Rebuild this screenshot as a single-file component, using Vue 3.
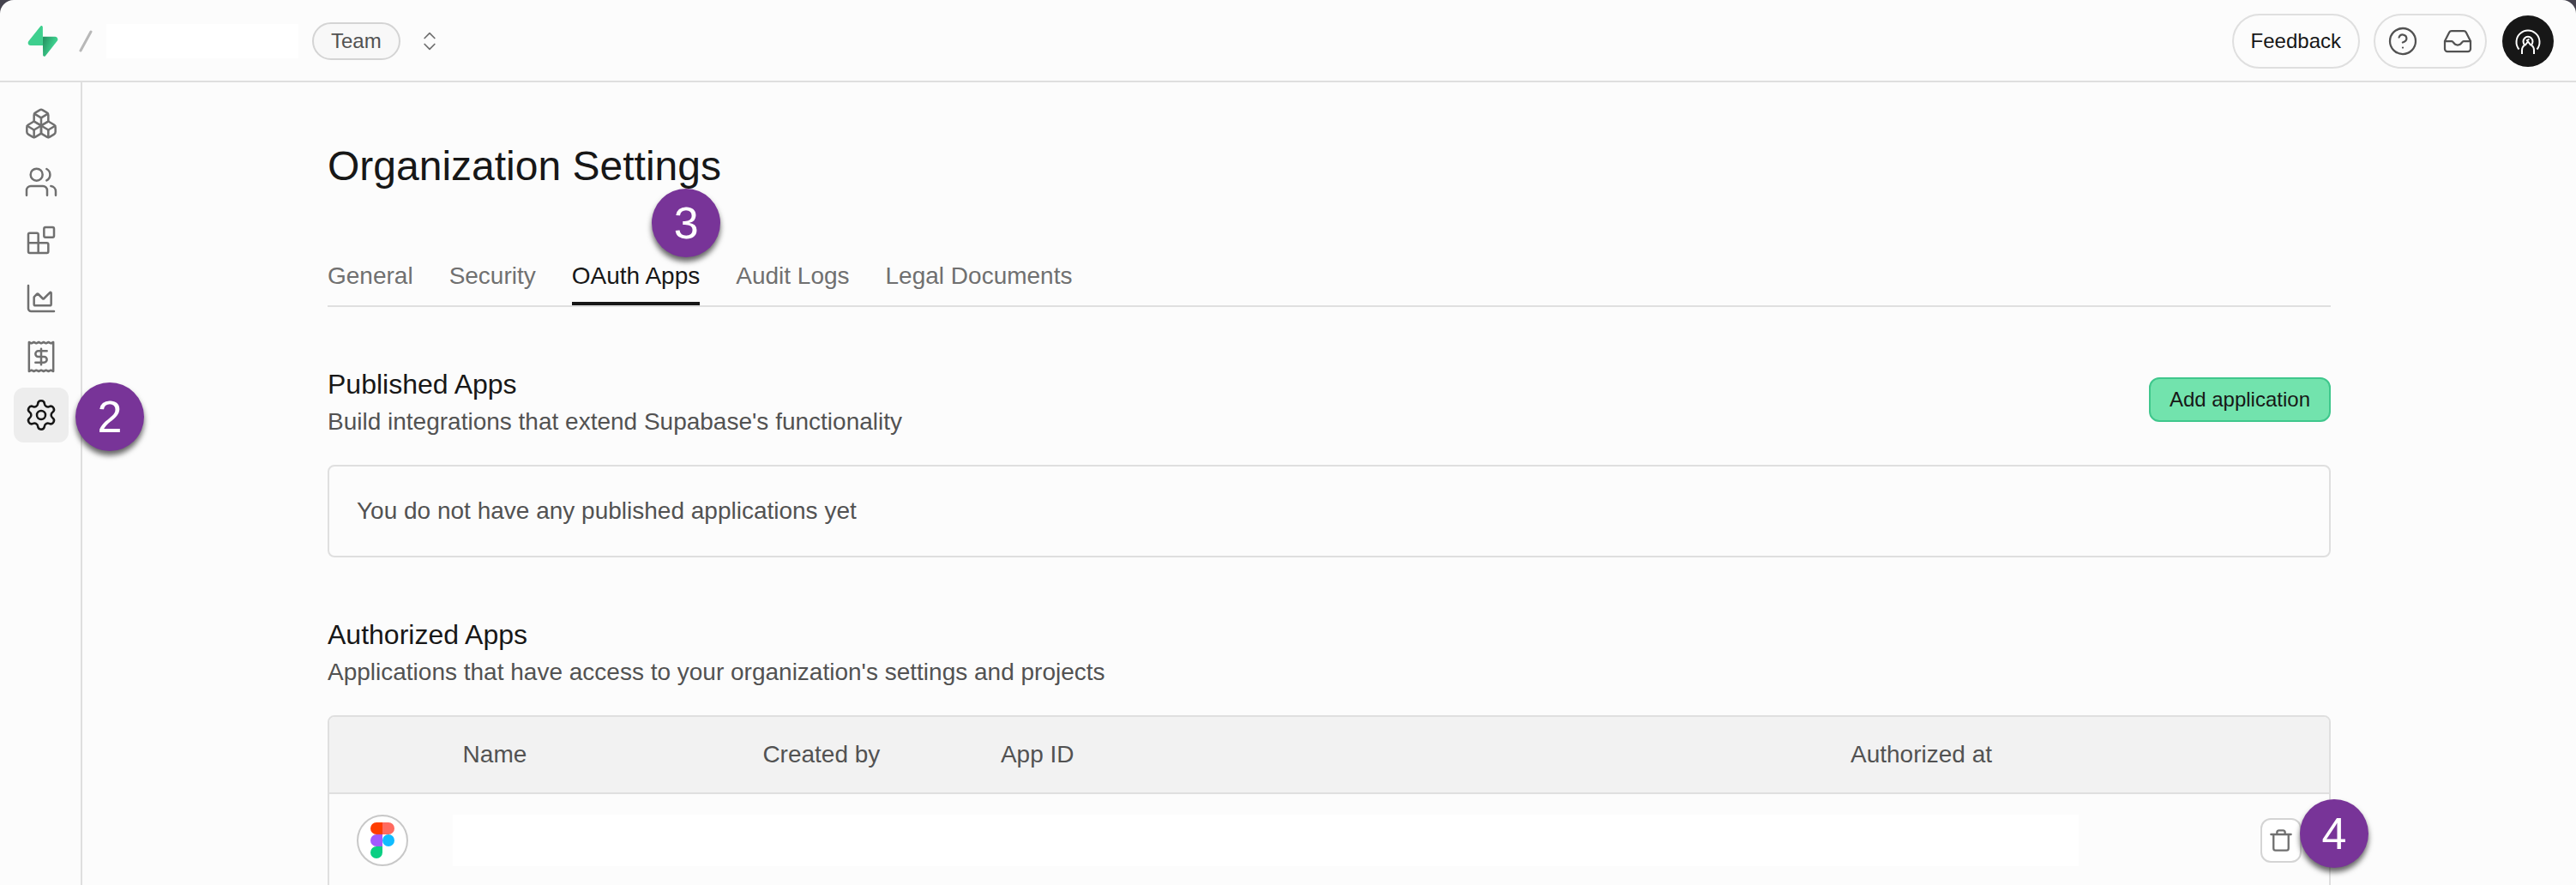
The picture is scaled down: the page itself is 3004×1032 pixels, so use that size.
<template>
  <div class="app-shell">
    <!-- Top bar -->
    <header class="top-bar">
      <div class="breadcrumb">
        <a class="logo" href="#" aria-label="Supabase home">
          <svg viewBox="0 0 109 113" fill="none">
            <defs>
              <linearGradient id="bolt" x1="54" y1="55" x2="94" y2="72" gradientUnits="userSpaceOnUse">
                <stop stop-color="#249361" />
                <stop offset="1" stop-color="#3ecf8e" />
              </linearGradient>
            </defs>
            <path d="M63.7076 110.284C60.8481 113.885 55.0502 111.912 54.9813 107.314L53.9738 40.0627L99.1935 40.0627C107.384 40.0627 111.952 49.5228 106.859 55.9374L63.7076 110.284Z" fill="url(#bolt)" />
            <path d="M45.317 2.07103C48.1765 -1.53037 53.9745 0.442937 54.0434 5.041L54.4849 72.2922H9.83113C1.64038 72.2922 -2.92775 62.8321 2.1655 56.4175L45.317 2.07103Z" fill="#3ecf8e" />
          </svg>
        </a>
        <svg class="slash" viewBox="0 0 16 28" aria-hidden="true">
          <path d="M14 3 2 25" />
        </svg>
        <span class="org-name"></span>
        <span class="plan-pill">Team</span>
        <button class="switcher" type="button" aria-label="Switch organization">
          <svg class="icon" viewBox="0 0 24 24"><path d="m7 15 5 5 5-5M7 9l5-5 5 5" /></svg>
        </button>
      </div>

      <div class="top-actions">
        <button class="feedback-btn" type="button">Feedback</button>
        <div class="icon-group">
          <button type="button" aria-label="Help">
            <svg class="icon" viewBox="0 0 24 24">
              <circle cx="12" cy="12" r="10" />
              <path d="M9.09 9a3 3 0 0 1 5.83 1c0 2-3 3-3 3M12 17h.01" />
            </svg>
          </button>
          <button type="button" aria-label="Notifications">
            <svg class="icon" viewBox="0 0 24 24">
              <path d="M2 12h5.5c1.2 0 1.2 3 4.5 3s3.3-3 4.5-3H22" />
              <path d="M5.45 5.11 2 12v6a2 2 0 0 0 2 2h16a2 2 0 0 0 2-2v-6l-3.45-6.89A2 2 0 0 0 16.76 4H7.24a2 2 0 0 0-1.79 1.11z" />
            </svg>
          </button>
        </div>
        <button class="avatar" type="button" aria-label="Account">
          <svg viewBox="0 0 32 32">
            <path d="M5.5 25.5A13.5 13.5 0 1 1 26.5 25.5" />
            <path d="M9 31v-4.500c0-3 1.200-4.500 3.200-6.200a5.500 5.500 0 1 1 7.600 0c2 1.700 3.200 3.200 3.200 6.200V31" />
            <path d="m12.500 21 3.500-4.500 3.500 4.500M14 15.500l3.500-2" />
          </svg>
        </button>
      </div>
    </header>

    <div class="body">
      <!-- Icon sidebar -->
      <nav class="sidebar" aria-label="Organization">
        <a
          v-for="item in navItems"
          :key="item.label"
          class="nav-item"
          :class="{ active: item.active }"
          :aria-label="item.label"
          href="#"
        >
          <svg class="icon" viewBox="0 0 24 24">
            <path v-for="d in item.paths" :key="d" :d="d" />
          </svg>
          <span v-if="item.step" class="step step-nav">{{ item.step }}</span>
        </a>
      </nav>

      <main class="main">
        <div class="content">
          <h1>Organization Settings</h1>

          <nav class="tabs" aria-label="Settings">
            <a
              v-for="tab in tabs"
              :key="tab.label"
              class="tab"
              :class="{ active: tab.active }"
              href="#"
            >
              {{ tab.label }}
              <span v-if="tab.step" class="step step-tab">{{ tab.step }}</span>
            </a>
          </nav>

          <section>
            <div class="section-head">
              <div>
                <h2>Published Apps</h2>
                <p>Build integrations that extend Supabase's functionality</p>
              </div>
              <button class="add-btn" type="button">Add application</button>
            </div>
            <div class="empty-card">You do not have any published applications yet</div>
          </section>

          <section>
            <div class="section-head">
              <div>
                <h2>Authorized Apps</h2>
                <p>Applications that have access to your organization's settings and projects</p>
              </div>
            </div>
            <table class="apps-table">
              <thead>
                <tr>
                  <th class="col-icon"></th>
                  <th class="col-name">Name</th>
                  <th class="col-created">Created by</th>
                  <th class="col-id">App ID</th>
                  <th class="col-date">Authorized at</th>
                  <th></th>
                </tr>
              </thead>
              <tbody>
                <tr>
                  <td>
                    <div class="app-logo">
                      <svg viewBox="0 0 28 42">
                        <path d="M7 42a7 7 0 0 0 7-7v-7H7a7 7 0 0 0 0 14z" fill="#0acf83" />
                        <path d="M0 21a7 7 0 0 1 7-7h7v14H7a7 7 0 0 1-7-7z" fill="#a259ff" />
                        <path d="M0 7a7 7 0 0 1 7-7h7v14H7a7 7 0 0 1-7-7z" fill="#ff3d00" />
                        <path d="M14 0h7a7 7 0 0 1 0 14h-7z" fill="#ff6a5f" />
                        <circle cx="21" cy="21" r="7" fill="#10bcff" />
                      </svg>
                    </div>
                  </td>
                  <td class="details" colspan="4"><div class="details-blank"></div></td>
                  <td class="actions">
                    <div class="action-wrap">
                      <button class="delete-btn" type="button" aria-label="Revoke app">
                        <svg class="icon" viewBox="0 0 24 24">
                          <path d="M2 6h20M19.500 6v14a2 2 0 0 1-2 2h-11a2 2 0 0 1-2-2V6M8 6V4a2 2 0 0 1 2-2h4a2 2 0 0 1 2 2v2" />
                        </svg>
                      </button>
                      <span class="step step-delete">4</span>
                    </div>
                  </td>
                </tr>
              </tbody>
            </table>
          </section>
        </div>
      </main>
    </div>
  </div>
</template>

<script setup>
import { ref } from 'vue'

const navItems = ref([
  {
    label: 'Projects',
    paths: [
      'M2.97 12.92A2 2 0 0 0 2 14.63v3.24a2 2 0 0 0 .97 1.71l3 1.8a2 2 0 0 0 2.06 0L12 19v-5.5l-5-3-4.03 2.42Z',
      'm7 16.5-4.74-2.85',
      'm7 16.5 5-3',
      'M7 16.5v5.17',
      'M12 13.5V19l3.97 2.38a2 2 0 0 0 2.06 0l3-1.8a2 2 0 0 0 .97-1.71v-3.24a2 2 0 0 0-.97-1.71L17 10.5l-5 3Z',
      'm17 16.5-5-3',
      'm17 16.5 4.74-2.85',
      'M17 16.5v5.17',
      'M7.97 4.42A2 2 0 0 0 7 6.13v4.37l5 3 5-3V6.13a2 2 0 0 0-.97-1.71l-3-1.8a2 2 0 0 0-2.06 0l-3 1.8Z',
      'M12 8 7.26 5.15',
      'm12 8 4.74-2.85',
      'M12 13.5V8'
    ]
  },
  {
    label: 'Team',
    paths: [
      'M4.6 7a4.2 4.2 0 1 0 8.4 0a4.2 4.2 0 1 0-8.4 0',
      'M1.8 21.5V18a3 3 0 0 1 3-3h8.400a3 3 0 0 1 3 3v3.500',
      'M15.800 3a4.500 4.500 0 0 1 0 8',
      'M18.800 15a3.800 3.800 0 0 1 3.400 3.800v2.700'
    ]
  },
  {
    label: 'Integrations',
    paths: [
      'M15 3h5a1 1 0 0 1 1 1v5a1 1 0 0 1-1 1h-5a1 1 0 0 1-1-1V4a1 1 0 0 1 1-1z',
      'M10 21V8a1 1 0 0 0-1-1H4a1 1 0 0 0-1 1v12a1 1 0 0 0 1 1h12a1 1 0 0 0 1-1v-5a1 1 0 0 0-1-1H3'
    ]
  },
  {
    label: 'Usage',
    paths: [
      'M3 3v16a2 2 0 0 0 2 2h16',
      'M7 11.207a.5.5 0 0 1 .146-.353l2-2a.5.5 0 0 1 .708 0l3.292 3.292a.5.5 0 0 0 .708 0l4.292-4.292a.5.5 0 0 1 .854.353V16a1 1 0 0 1-1 1H8a1 1 0 0 1-1-1z'
    ]
  },
  {
    label: 'Billing',
    paths: [
      'M3.5 1.8v20.4l1.7-.8 1.7.8 1.7-.8 1.7.8 1.7-.8 1.7.8 1.7-.8 1.7.8 1.7-.8 1.7.8V1.8l-1.7.8-1.7-.8-1.7.8-1.7-.8-1.7.8-1.7-.8-1.7.8-1.7-.8-1.7.8z',
      'M16 8h-6a2 2 0 1 0 0 4h4a2 2 0 1 1 0 4H8',
      'M12 17.5v-11'
    ]
  },
  {
    label: 'Organization settings',
    active: true,
    step: 2,
    paths: [
      'M9.671 4.136a2.34 2.34 0 0 1 4.659 0 2.34 2.34 0 0 0 3.319 1.915 2.34 2.34 0 0 1 2.33 4.033 2.34 2.34 0 0 0 0 3.831 2.34 2.34 0 0 1-2.33 4.033 2.34 2.34 0 0 0-3.319 1.915 2.34 2.34 0 0 1-4.659 0 2.34 2.34 0 0 0-3.32-1.915 2.34 2.34 0 0 1-2.33-4.033 2.34 2.34 0 0 0 0-3.831A2.34 2.34 0 0 1 6.35 6.051a2.34 2.34 0 0 0 3.319-1.915',
      'M9 12a3 3 0 1 0 6 0a3 3 0 1 0-6 0'
    ]
  }
])

const tabs = ref([
  { label: 'General' },
  { label: 'Security' },
  { label: 'OAuth Apps', active: true, step: 3 },
  { label: 'Audit Logs' },
  { label: 'Legal Documents' }
])
</script>

<style>
body {
  margin: 0;
  background: #45434e;
}
</style>

<style scoped>
.app-shell {
  display: flex;
  flex-direction: column;
  height: 100vh;
  overflow: hidden;
  background: #fcfcfc;
  border-radius: 16px 16px 0 0;
  color: #171717;
  font-family: 'Liberation Sans', Arial, sans-serif;
  font-size: 28px;
  line-height: 40px;
}

*,
*::before {
  box-sizing: border-box;
}

button {
  padding: 0;
  border: none;
  background: none;
  color: inherit;
  font-family: inherit;
  cursor: pointer;
}

a {
  color: inherit;
  text-decoration: none;
}

svg {
  display: block;
}

.icon {
  fill: none;
  stroke: currentColor;
  stroke-width: 1.5;
  stroke-linecap: round;
  stroke-linejoin: round;
}

/* Top bar */
.top-bar {
  display: flex;
  justify-content: space-between;
  align-items: center;
  padding: 16px 24px 14px 32px;
  border-bottom: 2px solid #dfdfdf;
}

.breadcrumb,
.top-actions {
  display: flex;
  align-items: center;
  gap: 16px;
}

.logo {
  margin-right: 8px;
}

.logo svg {
  width: 36px;
  height: 36px;
}

.slash {
  width: 16px;
  height: 28px;
  fill: none;
  stroke: #b8b8b8;
  stroke-width: 3;
  stroke-linecap: round;
}

.org-name {
  width: 224px;
  height: 40px;
  background: #fff;
}

.plan-pill {
  padding: 0 20px;
  border: 2px solid #d4d4d4;
  border-radius: 24px;
  background: #f8f8f8;
  color: #525252;
  font-size: 24px;
}

.switcher {
  display: flex;
  justify-content: center;
  width: 36px;
  color: #707070;
}

.switcher svg {
  width: 28px;
  height: 28px;
}

.feedback-btn {
  height: 64px;
  padding: 0 20px;
  border: 2px solid #dfdfdf;
  border-radius: 32px;
  font-size: 24px;
}

.icon-group {
  display: flex;
  border: 2px solid #dfdfdf;
  border-radius: 32px;
  color: #525252;
}

.icon-group button {
  display: flex;
  align-items: center;
  justify-content: center;
  width: 64px;
  height: 60px;
}

.icon-group svg {
  width: 36px;
  height: 36px;
}

.avatar {
  display: flex;
  align-items: center;
  justify-content: center;
  width: 60px;
  height: 60px;
  margin: 0 2px;
  border-radius: 50%;
  background: #171717;
}

.avatar svg {
  width: 32px;
  height: 32px;
  fill: none;
  stroke: #fff;
  stroke-width: 2;
}

/* Sidebar */
.body {
  display: flex;
  flex: 1;
  min-height: 0;
}

.sidebar {
  position: relative;
  z-index: 1;
  display: flex;
  flex-direction: column;
  gap: 4px;
  padding: 16px 14px 16px 16px;
  border-right: 2px solid #dfdfdf;
}

.nav-item {
  position: relative;
  display: flex;
  align-items: center;
  justify-content: center;
  width: 64px;
  height: 64px;
  border-radius: 12px;
  color: #707070;
}

.nav-item svg {
  width: 40px;
  height: 40px;
}

.nav-item.active {
  background: #ededed;
  color: #171717;
}

/* Numbered step markers */
.step {
  position: absolute;
  z-index: 2;
  display: flex;
  align-items: center;
  justify-content: center;
  width: 80px;
  height: 80px;
  border-radius: 50%;
  background: #783498;
  box-shadow: 0 5px 6px rgba(0, 0, 0, 0.6);
  color: #fff;
  font-size: 52px;
  line-height: 80px;
}

.step-nav {
  top: -6px;
  left: 72px;
}

.step-tab {
  top: -82px;
  right: -24px;
}

.step-delete {
  top: -22px;
  left: 46px;
}

/* Main content */
.main {
  flex: 1;
  min-width: 0;
  overflow: hidden;
}

.content {
  max-width: 2400px;
  margin: 0 auto;
  padding: 66px 32px;
}

h1,
h2,
p {
  margin: 0;
  font-weight: 400;
}

h1 {
  font-size: 48px;
  line-height: 64px;
}

.tabs {
  display: flex;
  gap: 42px;
  margin-top: 76px;
  border-bottom: 2px solid #dfdfdf;
}

.tab {
  position: relative;
  padding-bottom: 10px;
  border-bottom: 4px solid transparent;
  color: #707070;
}

.tab.active {
  border-bottom-color: #171717;
  color: #171717;
}

section {
  margin-top: 70px;
}

.section-head {
  display: flex;
  justify-content: space-between;
  align-items: flex-start;
  margin-bottom: 30px;
}

h2 {
  margin-bottom: 4px;
  font-size: 32px;
}

p {
  color: #525252;
}

.add-btn {
  height: 52px;
  margin-top: 12px;
  padding: 0 22px;
  border: 2px solid #3fc78c;
  border-radius: 12px;
  background: #72e3ad;
  font-size: 24px;
}

.empty-card {
  padding: 32px;
  border: 2px solid #dfdfdf;
  border-radius: 8px;
  color: #525252;
}

.apps-table {
  width: 100%;
  table-layout: fixed;
  border: 2px solid #dfdfdf;
  border-radius: 8px;
  border-collapse: separate;
  border-spacing: 0;
}

th {
  padding: 24px 32px;
  border-bottom: 2px solid #dfdfdf;
  background: #f2f2f2;
  color: #525252;
  font-weight: 400;
  text-align: left;
}

th:first-child {
  border-top-left-radius: 6px;
}

th:last-child {
  border-top-right-radius: 6px;
}

.col-icon {
  width: 5.3%;
}

.col-name {
  width: 15%;
}

.col-created {
  width: 11.9%;
}

.col-id {
  width: 42.5%;
}

.col-date {
  width: 20.5%;
}

td {
  padding: 24px 32px 36px;
  vertical-align: top;
}

.app-logo {
  display: flex;
  align-items: center;
  justify-content: center;
  width: 60px;
  height: 60px;
  border: 2px solid #c8c8c8;
  border-radius: 50%;
  background: #fff;
}

.app-logo svg {
  width: 28px;
  height: 42px;
}

.details {
  padding-right: 180px;
  padding-left: 20px;
}

.details-blank {
  height: 60px;
  background: #fff;
}

.actions {
  padding-top: 28px;
}

.action-wrap {
  position: relative;
  width: 48px;
}

.delete-btn {
  display: flex;
  align-items: center;
  justify-content: center;
  width: 48px;
  height: 52px;
  border: 2px solid #d4d4d4;
  border-radius: 12px;
  background: #fff;
  color: #707070;
}

.delete-btn svg {
  width: 28px;
  height: 28px;
  stroke-width: 2;
}
</style>
